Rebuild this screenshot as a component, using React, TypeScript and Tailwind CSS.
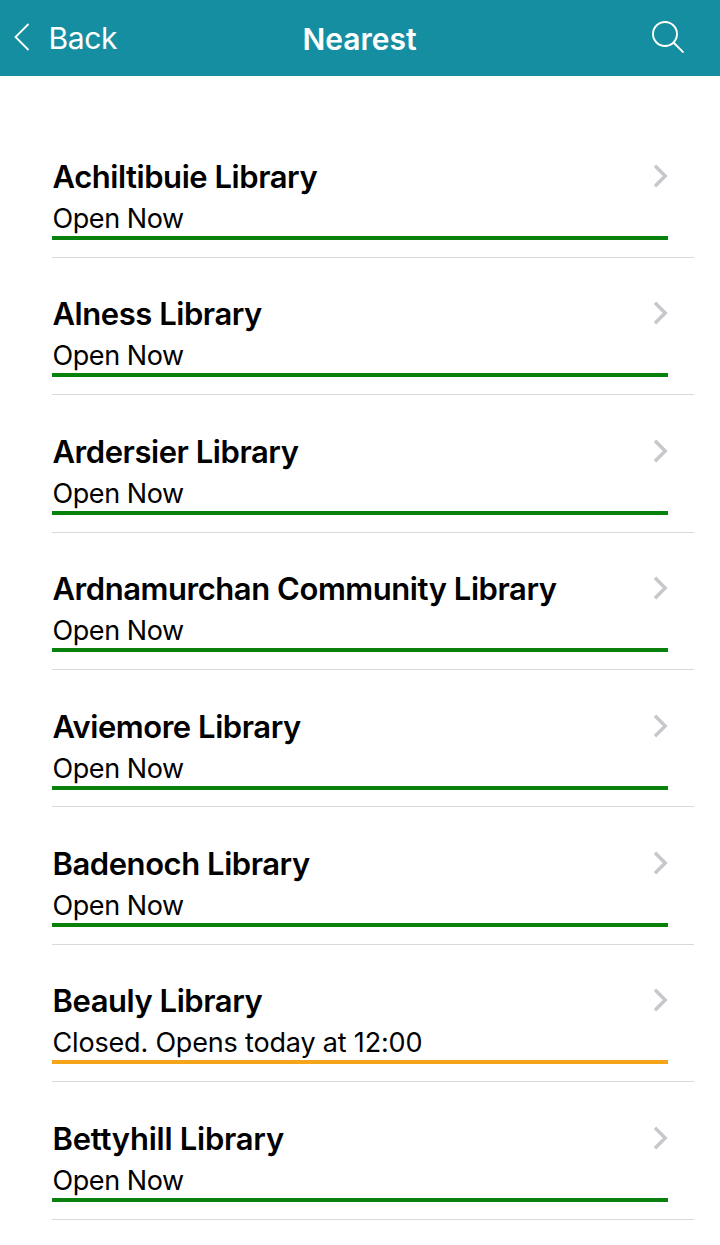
type Row = { name: string; wide?: boolean; closed?: boolean };

const rows: Row[] = [
  { name: 'Achiltibuie Library' },
  { name: 'Alness Library' },
  { name: 'Ardersier Library' },
  { name: 'Ardnamurchan Community Library' },
  { name: 'Aviemore Library' },
  { name: 'Badenoch Library' },
  { name: 'Beauly Library', closed: true },
  { name: 'Bettyhill Library', wide: true },
];

export default function App() {
  return (
    <div className="h-[1245px] w-full overflow-hidden bg-white font-['Inter',sans-serif] text-black">
      <header className="grid h-[76px] grid-cols-3 items-center bg-[#168ea1] text-white">
        <div className="flex items-center pl-[14px]">
          <svg className="mb-[2px]" width="16" height="28" viewBox="0 0 16 28" fill="none" stroke="currentColor" strokeWidth="1.8">
            <path d="M14.5 1 1.5 14l13 13" />
          </svg>
          <span className="ml-[18.5px] text-[30px] leading-[34px] tracking-[-0.35px]">Back</span>
        </div>
        <h1 className="pt-px pr-px text-center text-[30px] leading-[34px] font-semibold">Nearest</h1>
        <div className="flex justify-end pr-[36px] pb-[2px]">
          <svg width="32" height="32" viewBox="0 0 32 32" fill="none" stroke="currentColor" strokeWidth="1.9">
            <circle cx="13" cy="13" r="12" />
            <path d="m21.5 21.5 10 10" />
          </svg>
        </div>
      </header>
      <ul className="pt-[44.4px] pr-[26px] pl-[52px]">
        {rows.map((r) => (
          <li key={r.name} className="h-[137.4px] border-b border-[#d9d9dc] pt-[37.6px] pr-[26px]">
            <div className="flex h-[38px] items-center justify-between">
              <h2
                className={
                  r.wide
                    ? 'pl-[0.5px] text-[31px] leading-[38px] font-semibold tracking-[-0.25px] whitespace-nowrap'
                    : 'pl-[0.5px] text-[31px] leading-[38px] font-semibold tracking-[-0.45px] whitespace-nowrap'
                }
              >
                {r.name}
              </h2>
              <svg className="mb-[2px]" width="15" height="24" viewBox="0 0 15 24" fill="none" stroke="#c7c7cc" strokeWidth="3.5">
                <path d="m2 1.8 10.2 10.2L2 22.2" />
              </svg>
            </div>
            <p
              className={
                r.closed
                  ? 'h-[44px] border-b-[4px] border-[#f5a51a] pt-[6px] pl-[0.5px] text-[27px] leading-[34px] tracking-[-0.18px]'
                  : 'h-[44px] border-b-[4px] border-[#0a800d] pt-[6px] pl-[0.5px] text-[27px] leading-[34px] tracking-[-0.42px]'
              }
            >
              {r.closed ? 'Closed. Opens today at 12:00' : 'Open Now'}
            </p>
          </li>
        ))}
      </ul>
    </div>
  );
}
